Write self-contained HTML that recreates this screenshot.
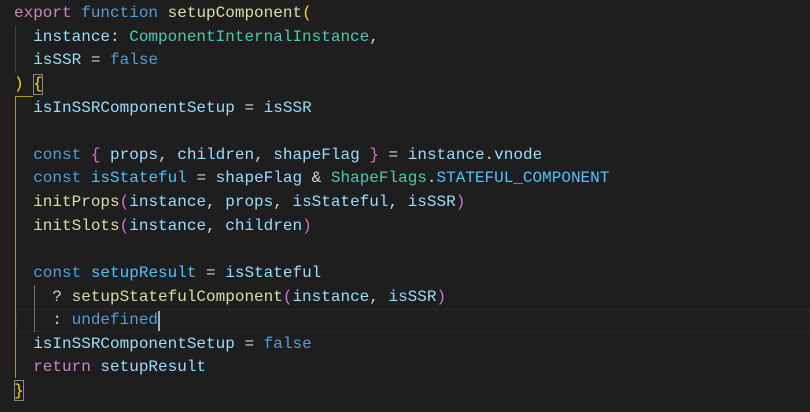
<!DOCTYPE html>
<html><head><style>
body{margin:0;background:#1e1e1e;width:810px;height:412px;overflow:hidden;position:relative}
.c{position:absolute;left:14px;top:2px;font-family:"Liberation Mono",monospace;font-size:16px;line-height:23.62px;color:#d4d4d4;white-space:pre}
.k{color:#c586c0}.b{color:#569cd6}.f{color:#dcdcaa}.v{color:#9cdcfe}.t{color:#4ec9b0}.n{color:#4fc1ff}
.y{color:#ffd700}.p{color:#da70d6}.q{color:#179fff}
.g{position:absolute;width:1px;background:#404040}
</style></head><body>
<div style="position:absolute;left:16px;top:309px;width:794px;height:23px;border:1px solid #282828;box-sizing:border-box"></div>
<div class="g" style="left:15px;top:26px;height:47px"></div>
<div class="g" style="left:34px;top:285px;height:47px;background:#707070"></div>
<div class="g" style="left:15px;top:96px;height:282px;background:#a89a2a"></div>
<div style="position:absolute;left:15px;top:96px;width:18px;height:1px;background:#a89a2a"></div>
<div style="position:absolute;left:33px;top:74px;width:10px;height:21px;border:1px solid #888;box-sizing:border-box"></div>
<div style="position:absolute;left:14px;top:380px;width:10px;height:21px;border:1px solid #888;box-sizing:border-box"></div>
<div style="position:absolute;left:158px;top:311px;width:2px;height:20px;background:#aeafad"></div>
<div class="c"><span class="k">export</span> <span class="b">function</span> <span class="f">setupComponent</span><span class="y">(</span>
  <span class="v">instance</span>: <span class="t">ComponentInternalInstance</span>,
  <span class="v">isSSR</span> = <span class="b">false</span>
<span class="y">)</span> <span class="y">{</span>
  <span class="v">isInSSRComponentSetup</span> = <span class="v">isSSR</span>

  <span class="b">const</span> <span class="p">{</span> <span class="v">props</span>, <span class="v">children</span>, <span class="v">shapeFlag</span> <span class="p">}</span> = <span class="v">instance</span>.<span class="v">vnode</span>
  <span class="b">const</span> <span class="n">isStateful</span> = <span class="v">shapeFlag</span> &amp; <span class="t">ShapeFlags</span>.<span class="n">STATEFUL_COMPONENT</span>
  <span class="f">initProps</span><span class="p">(</span><span class="v">instance</span>, <span class="v">props</span>, <span class="v">isStateful</span>, <span class="v">isSSR</span><span class="p">)</span>
  <span class="f">initSlots</span><span class="p">(</span><span class="v">instance</span>, <span class="v">children</span><span class="p">)</span>

  <span class="b">const</span> <span class="n">setupResult</span> = <span class="v">isStateful</span>
    ? <span class="f">setupStatefulComponent</span><span class="p">(</span><span class="v">instance</span>, <span class="v">isSSR</span><span class="p">)</span>
    : <span class="b">undefined</span>
  <span class="v">isInSSRComponentSetup</span> = <span class="b">false</span>
  <span class="k">return</span> <span class="v">setupResult</span>
<span class="y">}</span></div>
</body></html>
